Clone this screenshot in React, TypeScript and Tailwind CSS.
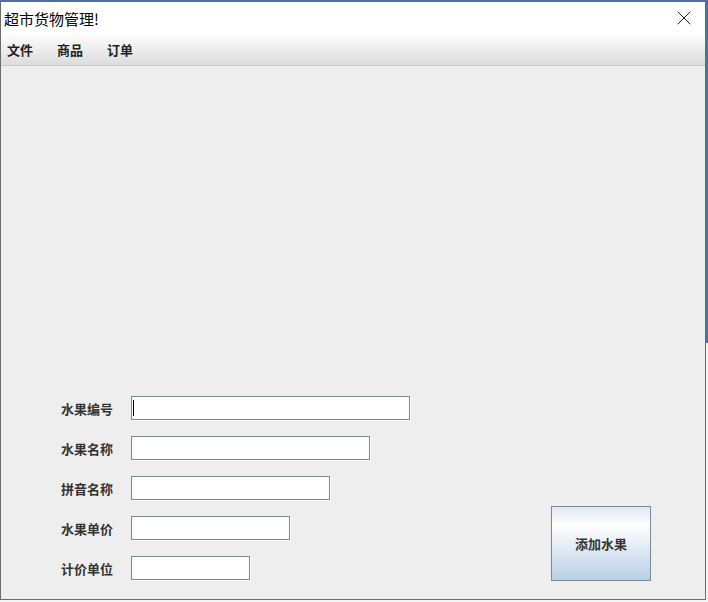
import { X } from 'lucide-react';

const font = { fontFamily: '"Noto Sans CJK SC", "Microsoft YaHei", sans-serif' };

const fields = [
  { label: '水果编号', width: 'w-[279px]', focused: true },
  { label: '水果名称', width: 'w-[239px]' },
  { label: '拼音名称', width: 'w-[199px]' },
  { label: '水果单价', width: 'w-[159px]' },
  { label: '计价单位', width: 'w-[119px]' },
];

export default function App() {
  return (
    <div className="relative w-[708px] h-[602px] bg-[#f4f4f4] overflow-hidden" style={font}>
      {/* desktop behind the window */}
      <div className="absolute left-0 top-0 w-full h-[2px] bg-[#4f6ea3]" />
      <div className="absolute right-0 top-0 w-[2px] h-[343px] bg-[#4f6ea3]" />

      <div className="relative mt-[2px] w-[706px] h-[598px] flex flex-col border-l border-r border-b border-[#6b6b6b] bg-[#eeeeee]">
        {/* Title bar */}
        <div className="h-[31px] shrink-0 bg-white flex items-center justify-between pl-[3px] pr-[9px]">
          <span className="text-[15px] text-black leading-none pt-[2px]">超市货物管理!</span>
          <X size={24} strokeWidth={0.9} className="text-black" />
        </div>

        {/* Menu bar */}
        <div className="h-[33px] shrink-0 flex items-center gap-[24px] pl-[6px] bg-gradient-to-b from-white to-[#dcdcdc] border-b border-[#c8c8c8]">
          {['文件', '商品', '订单'].map((m) => (
            <span key={m} className="text-[13px] font-bold text-[#222] leading-none pt-[1px]">{m}</span>
          ))}
        </div>

        {/* Content */}
        <div className="flex-1 flex items-end pb-[19px]">
          <div className="flex flex-col gap-[16px] ml-[60px]">
            {fields.map((f) => (
              <div key={f.label} className="flex items-center h-[24px]">
                <span className="w-[70px] text-[13px] font-bold text-[#333] leading-none pt-[1px]">{f.label}</span>
                <div className={`relative ${f.width} h-[24px] bg-white border border-[#7a8a99] shadow-[1px_1px_0_#ffffff]`}>
                  {f.focused && <span className="absolute left-[1px] top-[3px] w-[1px] h-[16px] bg-black" />}
                </div>
              </div>
            ))}
          </div>
          <button className="ml-auto mr-[54px] mb-[-1px] w-[100px] h-[75px] border border-[#7a8a99] bg-[linear-gradient(to_bottom,#dde8f3_0%,#ffffff_25%,#b8cfe5_100%)] text-[13px] font-bold text-[#333]">
            添加水果
          </button>
        </div>
      </div>
    </div>
  );
}
